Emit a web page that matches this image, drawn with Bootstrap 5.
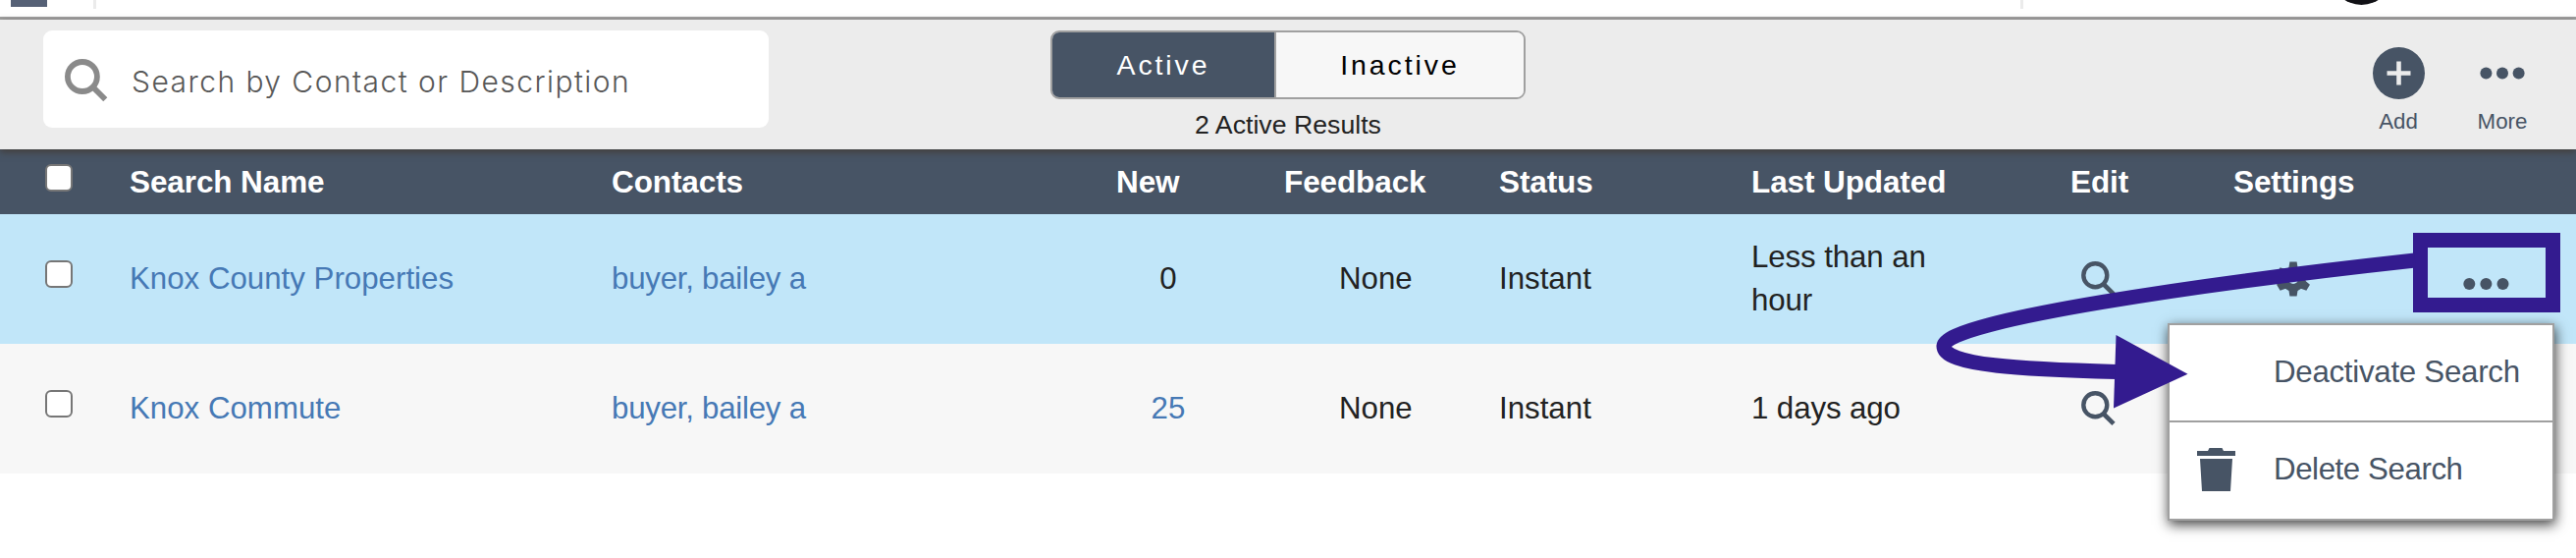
<!DOCTYPE html>
<html lang="en">
<head>
<meta charset="utf-8">
<meta name="viewport" content="width=device-width, initial-scale=1">
<title>Saved Searches</title>
<link href="https://cdn.jsdelivr.net/npm/bootstrap@5.3.0/dist/css/bootstrap.min.css" rel="stylesheet">
<style>
  :root { --slate: #475465; --line: #a0a0a0; --mark: #331b8f; }
  body { font-family: "Liberation Sans", Arial, sans-serif; font-size: 31.25px; line-height: 44px; color: #222; background: #fff; overflow: hidden; height: 568px; }
  svg { display: block; overflow: visible; flex: none; }
  .topstrip { height: 20px; border-bottom: 3px solid var(--line); overflow: hidden; }
  .topstrip .logo-tile { width: 37px; height: 7px; margin-left: 11px; background: #566176; }
  .topstrip .rule { width: 3px; height: 9px; background: #ebebeb; }
  .topstrip .rule-a { margin-left: 47px; }
  .topstrip .rule-b { margin-left: 1960px; }
  .topstrip .avatar { margin-left: 326px; }
  .toolbar { height: 132px; background: #ececec; box-shadow: 0 3px 7px #433f3c; z-index: 2; padding: 11px 50px 0 44px; }
  .searchbox { width: 739px; height: 99px; border-radius: 9px; padding-left: 22px; gap: 24px; }
  .searchbox svg { margin-top: 3px; }
  .searchbox input { font-family: Inter, sans-serif; font-weight: 300; font-size: 30px; letter-spacing: 1.45px; width: 600px; height: 60px; padding: 5px 0 0 0; }
  .searchbox input::placeholder { color: #585858; opacity: 1; }
  .status-toggle { width: 484px; height: 70px; border: 2px solid var(--line); border-radius: 9px; overflow: hidden; }
  .status-toggle .btn { --bs-btn-padding-y: 0; --bs-btn-padding-x: 0; border: 0; border-radius: 0; font-size: 28.5px; letter-spacing: 2.9px; line-height: 66px; }
  .status-toggle .is-on { width: 228px; flex: none; color: #fff; background: var(--slate); border-right: 2px solid var(--line); }
  .status-toggle .is-off { flex: 1; color: #000; background: #f7f7f7; }
  .results { font-size: 26.7px; line-height: 32px; margin-top: 10px; }
  .tool { font-size: 22.3px; line-height: 26px; color: var(--slate); width: 80px; padding-top: 17px; }
  .tool span { margin-top: 10px; }
  .grid-table { table-layout: fixed; width: 2624px; --bs-table-bg: transparent; --bs-table-color: #222; }
  .grid-table > :not(caption) > * > * { padding: 0; border: 0; vertical-align: middle; background: none; box-shadow: none; color: inherit; }
  .grid-table thead tr { height: 66px; background: var(--slate); color: #fff; font-size: 31.5px; letter-spacing: -.1px; }
  .grid-table tbody tr { height: 132px; background: #f7f7f7; }
  .grid-table tbody tr.picked { background: #c1e6f9; }
  .grid-table a { color: #4679b5; text-decoration: none; }
  .tick { appearance: none; display: block; width: 28px; height: 28px; margin: -9px 0 0 46px; background: #fff; border: 2px solid #767676; border-radius: 6px; }
  tbody .tick { margin-top: -11px; }
  .grid-table > tbody > tr > .count > * { display: block; width: 106px; text-align: center; }
  .grid-table > tbody > tr > .fb { padding-left: 56px; }
  .ago { width: 200px; letter-spacing: -.1px; }
  .contact { letter-spacing: -.25px; }
  .act-menu { left: 2208px; top: 329px; width: 394px; height: 201px; border: 2px solid var(--line); background: #fff; color: var(--slate); box-shadow: 1px 4px 12px rgba(0,0,0,.75); z-index: 5; }
  .act-menu .entry { height: 97px; gap: 39px; padding: 0 0 1px 28px; letter-spacing: -.27px; }
  .act-menu .entry + .entry { border-top: 2px solid var(--line); height: 100px; padding-bottom: 2px; letter-spacing: -.42px; }
  .act-menu .slot { width: 39px; }
  .annotation { left: 0; top: 0; z-index: 6; pointer-events: none; }
</style>
</head>
<body class="position-relative">

<svg width="0" height="0" class="position-absolute" aria-hidden="true">
  <symbol id="lens" viewBox="0 0 36 36">
    <circle cx="14.3" cy="14.3" r="12" fill="none" stroke="#475465" stroke-width="4.4"/>
    <path d="M23 23.5 33 33.3" stroke="#475465" stroke-width="4.6"/>
  </symbol>
  <symbol id="dots" viewBox="0 0 48 12">
    <circle cx="6.3" cy="6" r="6"/><circle cx="23.4" cy="6" r="6"/><circle cx="40.5" cy="6" r="6"/>
  </symbol>
</svg>

<header class="topstrip d-flex align-items-start">
  <div class="logo-tile"></div>
  <div class="rule rule-a"></div>
  <div class="rule rule-b"></div>
  <svg class="avatar" width="36" height="6" viewBox="0 0 36 6"><circle cx="18.5" cy="-26.5" r="31.5" fill="#111116"/></svg>
</header>

<section class="toolbar position-relative d-flex justify-content-between align-items-start">
  <div class="searchbox bg-white d-flex align-items-center">
    <svg width="44" height="44" viewBox="0 0 44 44"><circle cx="17.9" cy="18" r="15" fill="none" stroke="#8a8a8a" stroke-width="5.8"/><path d="M28.5 28.5 41.3 41.3" stroke="#8a8a8a" stroke-width="5.8"/></svg>
    <input class="border-0 bg-transparent" type="text" placeholder="Search by Contact or Description" aria-label="Search">
  </div>
  <div class="position-absolute start-50 translate-middle-x d-flex flex-column align-items-center">
    <div class="status-toggle d-flex">
      <button class="btn is-on" type="button">Active</button>
      <button class="btn is-off" type="button">Inactive</button>
    </div>
    <div class="results">2 Active Results</div>
  </div>
  <div class="d-flex" style="gap:26px; margin-right:-15px">
    <div class="tool d-flex flex-column align-items-center">
      <svg width="53" height="53" viewBox="0 0 53 53"><circle cx="26.5" cy="26.5" r="26.5" fill="#475465"/><path d="M26.5 14.5v24M14.5 26.5h24" stroke="#ececec" stroke-width="4.6"/></svg>
      <span>Add</span>
    </div>
    <div class="tool d-flex flex-column align-items-center">
      <svg width="46" height="53" viewBox="0 0 46 53" fill="#475465"><circle cx="6.4" cy="26.5" r="6"/><circle cx="23" cy="26.5" r="6"/><circle cx="39.6" cy="26.5" r="6"/></svg>
      <span>More</span>
    </div>
  </div>
</section>

<table class="table grid-table mb-0">
  <colgroup>
    <col style="width:132px"><col style="width:491px"><col style="width:514px"><col style="width:171px"><col style="width:219px">
    <col style="width:257px"><col style="width:325px"><col style="width:166px"><col style="width:185px"><col style="width:164px">
  </colgroup>
  <thead>
    <tr>
      <th><input class="tick" type="checkbox" aria-label="Select all"></th>
      <th>Search Name</th><th>Contacts</th><th>New</th><th>Feedback</th><th>Status</th><th>Last Updated</th><th>Edit</th><th>Settings</th><th></th>
    </tr>
  </thead>
  <tbody>
    <tr class="picked">
      <td><input class="tick" type="checkbox" aria-label="Select Knox County Properties"></td>
      <td><a href="#">Knox County Properties</a></td>
      <td><a class="contact" href="#">buyer, bailey a</a></td>
      <td class="count"><span>0</span></td>
      <td class="fb">None</td>
      <td>Instant</td>
      <td><div class="ago">Less than an hour</div></td>
      <td><svg width="36" height="36" style="margin-left:11px"><use href="#lens"/></svg></td>
      <td><svg width="36" height="36" viewBox="-18 -18 36 36" fill="#475465" style="margin-left:43px">
        <circle r="12.6"/>
        <g id="cog"><path d="M-4.8-10-3.6-17.5h7.2L4.8-10zM-4.8 10-3.6 17.5h7.2L4.8 10z"/></g>
        <use href="#cog" transform="rotate(60)"/><use href="#cog" transform="rotate(120)"/>
        <circle r="5" fill="#c1e6f9"/></svg></td>
      <td><svg width="48" height="12" style="margin:9px 0 0 49px" fill="#475465"><use href="#dots"/></svg></td>
    </tr>
    <tr>
      <td><input class="tick" type="checkbox" aria-label="Select Knox Commute"></td>
      <td><a href="#">Knox Commute</a></td>
      <td><a class="contact" href="#">buyer, bailey a</a></td>
      <td class="count"><a href="#">25</a></td>
      <td class="fb">None</td>
      <td>Instant</td>
      <td><div class="ago">1 days ago</div></td>
      <td><svg width="36" height="36" style="margin-left:11px"><use href="#lens"/></svg></td>
      <td></td>
      <td></td>
    </tr>
  </tbody>
</table>

<!-- Row actions menu -->
<div class="act-menu position-absolute">
  <div class="entry d-flex align-items-center"><span class="slot"></span><span>Deactivate Search</span></div>
  <div class="entry d-flex align-items-center">
    <svg class="slot" width="39" height="44" viewBox="0 0 39 44" fill="#475465"><path d="M0 3h11l1.5-3h13L27 3h12v5H0zM3 11h33l-2 33H5z"/></svg>
    <span>Delete Search</span>
  </div>
</div>

<!-- Callout drawn over the page -->
<svg class="annotation position-absolute" width="2624" height="568" viewBox="0 0 2624 568">
  <rect x="2465.5" y="244.5" width="135" height="66" fill="none" stroke="#331b8f" stroke-width="15"/>
  <path d="M2460 265C2250 288 1982 326 1980 352C1979 372 2060 376 2156 378.5" fill="none" stroke="#331b8f" stroke-width="15"/>
  <path d="M2155.5 341 2228.5 380.7 2153 415.5z" fill="#331b8f"/>
</svg>

<script src="https://cdn.jsdelivr.net/npm/bootstrap@5.3.0/dist/js/bootstrap.bundle.min.js"></script>
</body>
</html>
